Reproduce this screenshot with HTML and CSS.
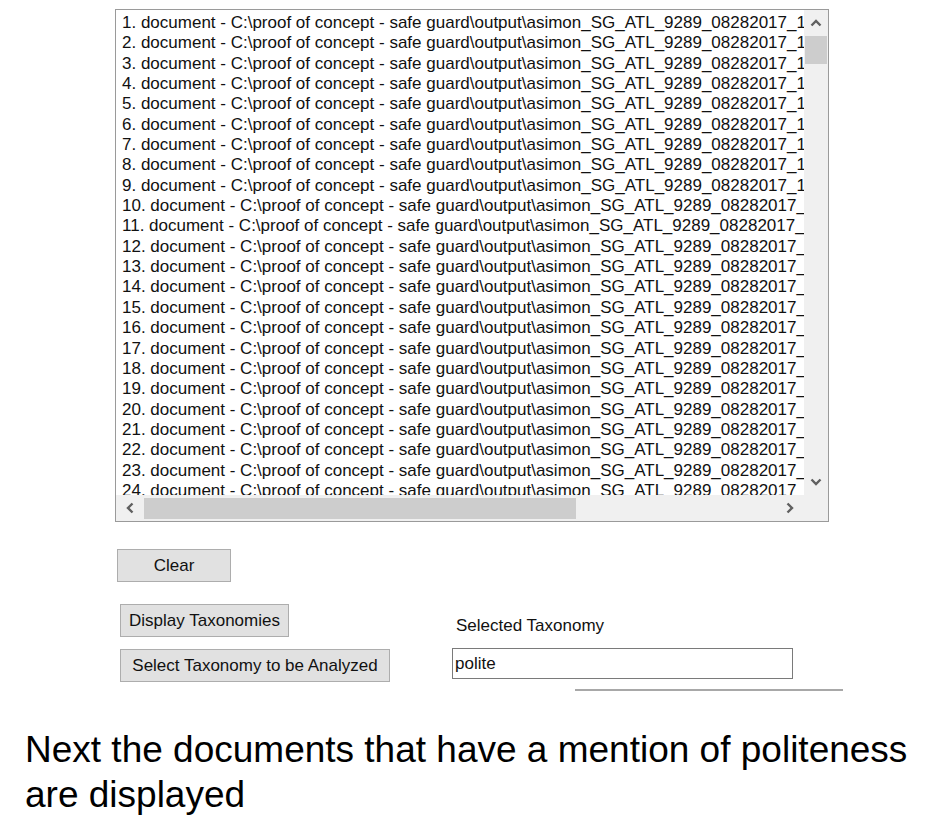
FILE: index.html
```html
<!DOCTYPE html>
<html lang="en">
<head>
  <meta charset="UTF-8" />
  <title>Taxonomy Analyzer</title>
  <link rel="stylesheet" href="styles.css">
</head>
<body>

  <div class="form-area">
    <div class="listbox">
      <div class="list-items">
        <div class="item">1. document - C:\proof of concept - safe guard\output\asimon_SG_ATL_9289_08282017_1</div>
        <div class="item">2. document - C:\proof of concept - safe guard\output\asimon_SG_ATL_9289_08282017_1</div>
        <div class="item">3. document - C:\proof of concept - safe guard\output\asimon_SG_ATL_9289_08282017_1</div>
        <div class="item">4. document - C:\proof of concept - safe guard\output\asimon_SG_ATL_9289_08282017_1</div>
        <div class="item">5. document - C:\proof of concept - safe guard\output\asimon_SG_ATL_9289_08282017_1</div>
        <div class="item">6. document - C:\proof of concept - safe guard\output\asimon_SG_ATL_9289_08282017_1</div>
        <div class="item">7. document - C:\proof of concept - safe guard\output\asimon_SG_ATL_9289_08282017_1</div>
        <div class="item">8. document - C:\proof of concept - safe guard\output\asimon_SG_ATL_9289_08282017_1</div>
        <div class="item">9. document - C:\proof of concept - safe guard\output\asimon_SG_ATL_9289_08282017_1</div>
        <div class="item">10. document - C:\proof of concept - safe guard\output\asimon_SG_ATL_9289_08282017_</div>
        <div class="item">11. document - C:\proof of concept - safe guard\output\asimon_SG_ATL_9289_08282017_</div>
        <div class="item">12. document - C:\proof of concept - safe guard\output\asimon_SG_ATL_9289_08282017_</div>
        <div class="item">13. document - C:\proof of concept - safe guard\output\asimon_SG_ATL_9289_08282017_</div>
        <div class="item">14. document - C:\proof of concept - safe guard\output\asimon_SG_ATL_9289_08282017_</div>
        <div class="item">15. document - C:\proof of concept - safe guard\output\asimon_SG_ATL_9289_08282017_</div>
        <div class="item">16. document - C:\proof of concept - safe guard\output\asimon_SG_ATL_9289_08282017_</div>
        <div class="item">17. document - C:\proof of concept - safe guard\output\asimon_SG_ATL_9289_08282017_</div>
        <div class="item">18. document - C:\proof of concept - safe guard\output\asimon_SG_ATL_9289_08282017_</div>
        <div class="item">19. document - C:\proof of concept - safe guard\output\asimon_SG_ATL_9289_08282017_</div>
        <div class="item">20. document - C:\proof of concept - safe guard\output\asimon_SG_ATL_9289_08282017_</div>
        <div class="item">21. document - C:\proof of concept - safe guard\output\asimon_SG_ATL_9289_08282017_</div>
        <div class="item">22. document - C:\proof of concept - safe guard\output\asimon_SG_ATL_9289_08282017_</div>
        <div class="item">23. document - C:\proof of concept - safe guard\output\asimon_SG_ATL_9289_08282017_</div>
        <div class="item">24. document - C:\proof of concept - safe guard\output\asimon_SG_ATL_9289_08282017_</div>
      </div>

      <!-- vertical scrollbar -->
      <div class="vscroll">
        <span class="arrow">
          <svg width="12" height="8" viewBox="0 0 12 8"><path d="M1.5 6.5 L6 2 L10.5 6.5" fill="none" stroke="#606060" stroke-width="2.4"/></svg>
        </span>
        <div class="vthumb"></div>
        <div class="track"></div>
        <span class="arrow">
          <svg width="12" height="8" viewBox="0 0 12 8"><path d="M1.5 1.5 L6 6 L10.5 1.5" fill="none" stroke="#606060" stroke-width="2.4"/></svg>
        </span>
      </div>

      <!-- horizontal scrollbar -->
      <div class="hscroll">
        <span class="arrow">
          <svg width="8" height="12" viewBox="0 0 8 12"><path d="M6.5 1.5 L2 6 L6.5 10.5" fill="none" stroke="#606060" stroke-width="2.4"/></svg>
        </span>
        <div class="hthumb"></div>
        <div class="track"></div>
        <span class="arrow">
          <svg width="8" height="12" viewBox="0 0 8 12"><path d="M1.5 1.5 L6 6 L1.5 10.5" fill="none" stroke="#606060" stroke-width="2.4"/></svg>
        </span>
      </div>
      <div class="corner"></div>
    </div>

    <button class="win-btn btn-clear">Clear</button>

    <div class="taxonomy-row">
      <div class="btn-col">
        <button class="win-btn btn-display">Display Taxonomies</button>
        <button class="win-btn btn-select">Select Taxonomy to be Analyzed</button>
      </div>
      <div class="selected-col">
        <label class="selected-label" for="selected">Selected Taxonomy</label>
        <input class="selected-box" id="selected" type="text" value="polite">
        <div class="divider"></div>
      </div>
    </div>
  </div>

  <p class="caption">Next the documents that have a mention of politeness are displayed</p>

</body>
</html>
```

FILE: styles.css
```css
* {
  box-sizing: border-box;
}

body {
  margin: 0;
  background: #fff;
  font-family: 'Liberation Sans', Arial, sans-serif;
  color: #000;
}

.form-area {
  padding: 9px 0 0 115px;
}

/* list box */
.listbox {
  width: 714px;
  height: 513px;
  border: 1px solid #9a9a9a;
  display: grid;
  grid-template-columns: 1fr 24px;
  grid-template-rows: 1fr 26px;
  background: #fff;
}

.list-items {
  overflow: hidden;
  padding: 3px 0 0 6px;
  font-size: 17px;
  color: #111;
}

.item {
  white-space: nowrap;
  line-height: 20.35px;
  height: 20.35px;
}

.vscroll {
  background: #f0f0f0;
  display: flex;
  flex-direction: column;
  align-items: center;
}

.vscroll .arrow {
  height: 26px;
  width: 100%;
  display: flex;
  align-items: center;
  justify-content: center;
}

.vthumb {
  width: 22px;
  height: 28px;
  background: #cdcdcd;
}

.track {
  flex: 1;
}

.hscroll {
  background: #f0f0f0;
  display: flex;
  align-items: center;
}

.hscroll .arrow {
  width: 28px;
  height: 100%;
  display: flex;
  align-items: center;
  justify-content: center;
}

.hthumb {
  width: 432px;
  height: 21px;
  background: #cdcdcd;
}

.corner {
  background: #f0f0f0;
}

/* buttons */
.win-btn {
  display: block;
  height: 33px;
  background: #e1e1e1;
  border: 1px solid #adadad;
  font-family: 'Liberation Sans', Arial, sans-serif;
  font-size: 17px;
  color: #111;
  padding: 0;
  white-space: nowrap;
}

.btn-clear {
  width: 114px;
  margin: 27px 0 0 2px;
}

.taxonomy-row {
  display: grid;
  grid-template-columns: 337px 400px;
  margin-top: 22px;
}

.btn-col {
  display: flex;
  flex-direction: column;
  gap: 12px;
  padding-left: 5px;
}

.btn-display {
  width: 169px;
}

.btn-select {
  width: 270px;
}

.selected-col {
  padding-top: 12px;
}

.selected-label {
  display: block;
  font-size: 17px;
  color: #111;
  margin-left: 4px;
  height: 32px;
}

.selected-box {
  display: block;
  width: 341px;
  height: 31px;
  border: 1px solid #7a7a7a;
  font-family: 'Liberation Sans', Arial, sans-serif;
  font-size: 17px;
  color: #111;
  padding: 0 2px;
  margin: 0;
}

.divider {
  width: 268px;
  height: 2px;
  background: #a8a8a8;
  margin: 10px 0 0 123px;
}

.caption {
  margin: 36px 0 0 25px;
  width: 900px;
  font-size: 37px;
  line-height: 45px;
}
```
